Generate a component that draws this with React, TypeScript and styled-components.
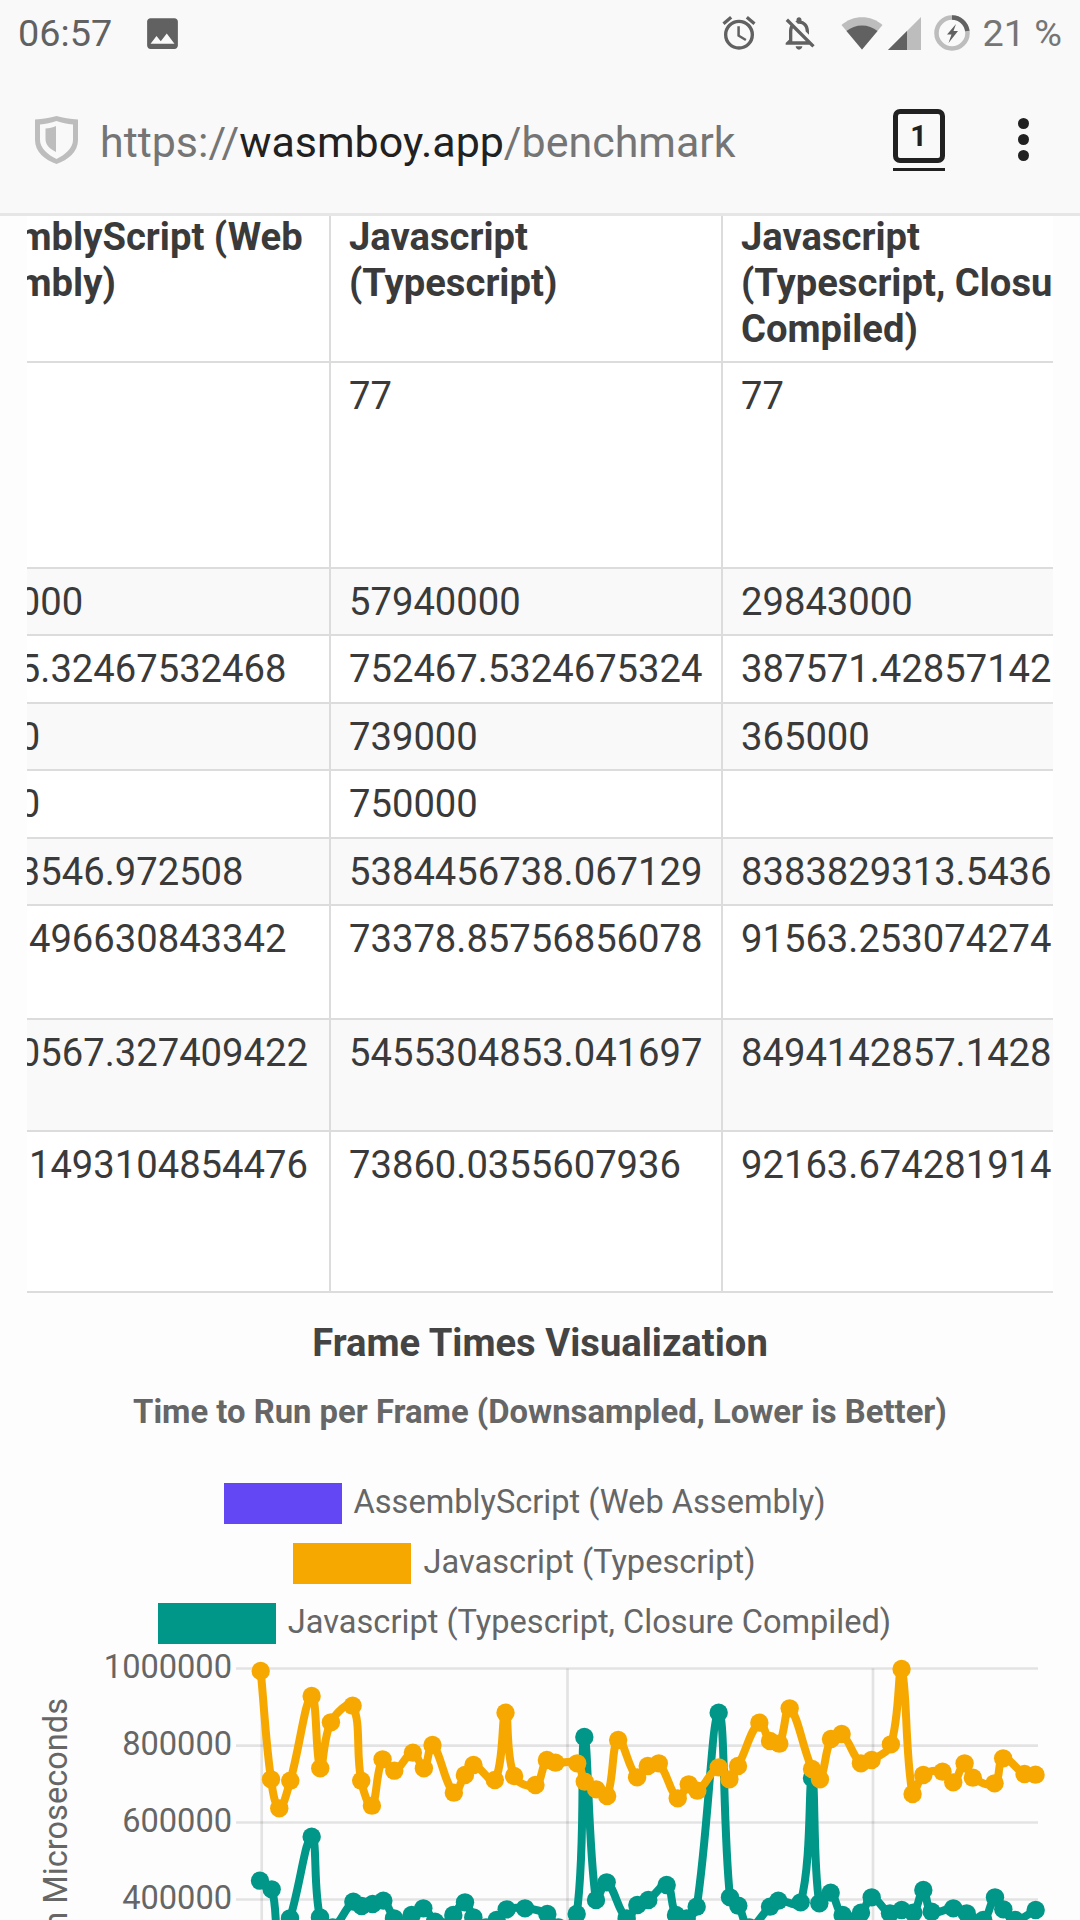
import React from "react";
import styled, { createGlobalStyle } from "styled-components";
import { MdImage, MdOutlineAlarm, MdOutlineNotificationsOff } from "react-icons/md";

const Global = createGlobalStyle`
  html, body { margin: 0; padding: 0; background: #fdfdfd; }
  body { font-family: Roboto, "Liberation Sans", sans-serif; }
`;

const Page = styled.div`
  width: 1080px;
  height: 1920px;
  overflow: hidden;
  background: #fdfdfd;
  display: flex;
  flex-direction: column;
`;

const Chrome = styled.header`
  height: 216px;
  flex: none;
  box-sizing: border-box;
  background: #f9f9f9;
  border-bottom: 3px solid #e6e6e6;
  display: flex;
  flex-direction: column;
`;

const StatusBar = styled.div`
  height: 66px;
  flex: none;
  padding: 0 18px;
  display: flex;
  align-items: center;
  color: #616161;
`;

const Clock = styled.span`
  font-size: 37.8px;
  width: 123.5px;
`;

const Spacer = styled.div`
  flex: 1;
`;

const StatusSlot = styled.span<{ $ml: number }>`
  display: flex;
  margin-left: ${(p) => p.$ml}px;
`;

const BatteryText = styled.span`
  font-size: 37.8px;
  color: #757575;
  margin-left: 12px;
`;

const Toolbar = styled.div`
  flex: 1;
  display: flex;
  align-items: center;
  padding: 0 0 0 34px;
`;

const Url = styled.div`
  margin: 4px 0 0 21px;
  font-size: 42.95px;
  color: #757575;
  flex: 1;
`;

const UrlHost = styled.span`
  color: #212121;
`;

const TabCounter = styled.div`
  position: relative;
  width: 52px;
  height: 54px;
  box-sizing: border-box;
  border: 5.5px solid #212121;
  border-radius: 7px;
  font-size: 29px;
  font-weight: 700;
  color: #212121;
  display: flex;
  align-items: center;
  justify-content: center;
  margin: -8px 73.5px 0 0;
  &::after {
    content: "";
    position: absolute;
    left: -5px;
    right: -5px;
    bottom: -13px;
    height: 3px;
    background: #212121;
  }
`;

const Dots = styled.div`
  display: flex;
  flex-direction: column;
  gap: 5px;
  margin-right: 51px;
`;

const Dot = styled.span`
  width: 11px;
  height: 11px;
  border-radius: 50%;
  background: #212121;
`;

const TableViewport = styled.div`
  flex: none;
  margin: 0 27px;
  height: 1077px;
  overflow: hidden;
  background: #fff;
`;

const Table = styled.table`
  border-collapse: collapse;
  table-layout: fixed;
  width: 1240px;
  margin-left: -112px;
  margin-top: -15px;
  font-size: 38.2px;
  line-height: 46px;
  color: #3a3a3a;
`;

const Row = styled.tr<{ $h: number; $shade?: boolean }>`
  height: ${(p) => p.$h}px;
  background: ${(p) => (p.$shade ? "#f9f9f9" : "#fff")};
`;

const Head = styled.th`
  text-align: left;
  vertical-align: top;
  font-weight: 700;
  padding: 11px 18px 7px;
  border: 2.7px solid #dcdcdc;
  &:first-child {
    padding-left: 16px;
  }
`;

const Cell = styled.td`
  vertical-align: top;
  padding: 10px 18px 8px;
  border: 2.7px solid #dcdcdc;
  white-space: nowrap;
  overflow: hidden;
  &:first-child {
    padding-left: 16px;
  }
`;

const ChartSection = styled.section`
  flex: 1;
  display: flex;
  flex-direction: column;
  align-items: center;
  min-height: 0;
`;

const ChartTitle = styled.h2`
  margin: 28px 0 0;
  font-size: 38.2px;
  line-height: 44px;
  font-weight: 700;
  color: #444;
`;

const ChartSubtitle = styled.h3`
  margin: 26px 0 0;
  font-size: 32.8px;
  line-height: 42px;
  font-weight: 700;
  color: #666;
`;

const Legend = styled.ul`
  list-style: none;
  margin: 50px 0 0;
  padding: 0 31px 0 0;
  display: flex;
  flex-direction: column;
  align-items: center;
  gap: 19px;
`;

const LegendItem = styled.li`
  display: flex;
  align-items: center;
  gap: 12px;
  height: 41px;
  font-size: 32.6px;
  color: #666;
`;

const LegendLabel = styled.span`
  margin-bottom: 3px;
`;

const Swatch = styled.span<{ $c: string }>`
  width: 118px;
  height: 41px;
  background: ${(p) => p.$c};
`;

const ChartSvg = styled.svg`
  display: block;
  flex: none;
  margin-top: 6px;
`;

type P = [number, number];

const CHART_TOP = 1650;

const toPts = (raw: number[][], ox: number): P[] =>
  raw.map(([x, y]) => [ox + x / 2.904, 1640 + y / 3 - CHART_TOP] as P);

const fromZoom = (raw: number[][], ox: number): P[] =>
  raw.map(([x, y]) => [ox + x / 3, 1840 + y / 3 - CHART_TOP] as P);

const orange: P[] = [
  ...toPts(
    [
      [757, 93], [787, 418], [811, 505], [843, 422], [905, 168], [930, 385], [961, 247], [1024, 197],
      [1049, 422], [1080, 497], [1111, 358], [1145, 392], [1199, 338], [1231, 385], [1256, 315],
      [1318, 458], [1350, 405], [1375, 375], [1437, 420], [1468, 218], [1493, 408], [1555, 435],
    ],
    0
  ),
  ...toPts(
    [
      [20, 360], [45, 368], [108, 370], [130, 425], [163, 448], [195, 468], [227, 300], [282, 412],
      [313, 378], [345, 370], [400, 475], [432, 433], [457, 452], [519, 382], [550, 418], [575, 378],
      [637, 248], [668, 303], [695, 311], [725, 205], [790, 387], [813, 418], [845, 297], [876, 282],
      [932, 370], [963, 360], [1019, 313], [1050, 87], [1082, 462], [1113, 405], [1169, 395],
      [1200, 427], [1233, 370], [1257, 413], [1320, 430], [1345, 355], [1407, 402], [1439, 404],
    ],
    540
  ),
];

const teal: P[] = [
  ...fromZoom(
    [
      [60, 122], [95, 148], [117, 300], [150, 235], [215, -10], [240, 232], [278, 262], [340, 185],
      [365, 198], [398, 192], [430, 182], [462, 235], [490, 262], [515, 225], [550, 205], [585, 245],
      [612, 262], [640, 225], [675, 187], [700, 232], [738, 262], [770, 240], [800, 208], [855, 205],
      [922, 222], [955, 262], [1010, 222], [1033, -309], [1068, 180], [1100, 127], [1160, 235],
      [1192, 195], [1225, 180],
    ],
    240
  ),
  ...fromZoom(
    [
      [20, 135], [48, 225], [80, 235], [110, 200], [176, -382], [210, 172], [235, 197], [268, 262],
      [330, 200], [355, 182], [422, 187], [456, -186], [478, 190], [512, 158], [548, 225], [603, 218],
      [635, 172], [690, 220], [725, 210], [760, 218], [790, 150], [815, 215], [880, 205], [920, 220],
      [970, 240], [1005, 172], [1030, 208], [1065, 240], [1127, 210],
    ],
    660
  ),
];

function spline(pts: P[], t = 0.4): string {
  let d = `M${pts[0][0].toFixed(1)} ${pts[0][1].toFixed(1)}`;
  const cps = pts.map((c, i) => {
    const p = pts[Math.max(i - 1, 0)];
    const n = pts[Math.min(i + 1, pts.length - 1)];
    const d01 = Math.hypot(c[0] - p[0], c[1] - p[1]);
    const d12 = Math.hypot(n[0] - c[0], n[1] - c[1]);
    const sum = d01 + d12 || 1;
    const fa = (t * d01) / sum;
    const fb = (t * d12) / sum;
    return {
      in: [c[0] - fa * (n[0] - p[0]), c[1] - fa * (n[1] - p[1])],
      out: [c[0] + fb * (n[0] - p[0]), c[1] + fb * (n[1] - p[1])],
    };
  });
  for (let i = 1; i < pts.length; i++) {
    d += `C${cps[i - 1].out[0].toFixed(1)} ${cps[i - 1].out[1].toFixed(1)} ${cps[i].in[0].toFixed(1)} ${cps[i].in[1].toFixed(1)} ${pts[i][0].toFixed(1)} ${pts[i][1].toFixed(1)}`;
  }
  return d;
}

const rows: { h: number; shade?: boolean; c: string[] }[] = [
  { h: 205.5, c: ["", "77", "77"] },
  { h: 67.5, shade: true, c: ["2864000", "57940000", "29843000"] },
  { h: 67.5, c: ["37205.32467532468", "752467.5324675324", "387571.4285714286"] },
  { h: 67, shade: true, c: ["36500", "739000", "365000"] },
  { h: 68, c: ["36000", "750000", ""] },
  { h: 67, shade: true, c: ["43903546.972508", "5384456738.067129", "8383829313.543614"] },
  { h: 114, c: ["6730.496630843342", "73378.85756856078", "91563.25307427423"] },
  { h: 112, shade: true, c: ["43900567.327409422", "5455304853.041697", "8494142857.142857"] },
  { h: 161, c: ["6740.1493104854476", "73860.0355607936", "92163.67428191489"] },
];

const gridY = [1668.5, 1745.7, 1822.5, 1899.5].map((y) => y - CHART_TOP);
const gridX = [261.7, 567.5, 873];
const ticks = ["1000000", "800000", "600000", "400000"];

const Shield = () => (
  <svg width="45" height="50" viewBox="0 0 45 50">
    <path d="M22.5 1 C29 3 36 4 44 4.5 V25 C44 37 34 45 22.5 49 C11 45 1 37 1 25 V4.5 C9 4 16 3 22.5 1 Z" fill="#bdbdbd" />
    <path d="M22.5 6 C28 8 33 9 39 9.5 V25 C39 33 31 40 22.5 44 C14 40 6 33 6 25 V9.5 C12 9 17 8 22.5 6 Z" fill="#f9f9f9" />
    <path d="M22 11 V37 C16 34 11.5 30 11.5 24 V13.5 C15 13.5 19 12.5 22 11 Z" fill="#bdbdbd" />
  </svg>
);

const Wifi = () => (
  <svg width="44" height="34" viewBox="0 0 44 34">
    <path d="M22 33.5 L1.5 9 C13 -1.5 31 -1.5 42.5 9 Z" fill="#bdbdbd" />
    <path d="M22 33.5 L6.5 15 C15 7.5 29 7.5 37.5 15 Z" fill="#616161" />
  </svg>
);

const Signal = () => (
  <svg width="33" height="33" viewBox="0 0 33 33">
    <path d="M33 0 V33 H0 Z" fill="#bdbdbd" />
    <path d="M19 14 V33 H0 Z" fill="#616161" />
  </svg>
);

const BatteryRing = () => (
  <svg width="36" height="36" viewBox="0 0 36 36">
    <circle cx="18" cy="18" r="15.5" fill="none" stroke="#bdbdbd" strokeWidth="4.5" />
    <path d="M18 2.5 A15.5 15.5 0 0 1 33.3 16" fill="none" stroke="#616161" strokeWidth="4.5" />
    <path d="M22 9 L13 19.5 H17.5 L14.5 28 L24 16 H19.5 Z" fill="#616161" />
  </svg>
);

export default function App() {
  return (
    <Page>
      <Global />
      <Chrome>
        <StatusBar>
          <Clock>06:57</Clock>
          <MdImage size={41} color="#616161" />
          <Spacer />
          <MdOutlineAlarm size={40} color="#616161" />
          <StatusSlot $ml={20}>
            <MdOutlineNotificationsOff size={40} color="#616161" />
          </StatusSlot>
          <StatusSlot $ml={21}>
            <Wifi />
          </StatusSlot>
          <StatusSlot $ml={4}>
            <Signal />
          </StatusSlot>
          <StatusSlot $ml={13}>
            <BatteryRing />
          </StatusSlot>
          <BatteryText>21 %</BatteryText>
        </StatusBar>
        <Toolbar>
          <Shield />
          <Url>
            https://<UrlHost>wasmboy.app</UrlHost>/benchmark
          </Url>
          <TabCounter>1</TabCounter>
          <Dots>
            <Dot />
            <Dot />
            <Dot />
          </Dots>
        </Toolbar>
      </Chrome>
      <TableViewport>
        <Table>
          <colgroup>
            <col width="414" />
            <col width="392" />
            <col width="434" />
          </colgroup>
          <thead>
            <Row $h={160}>
              <Head>AssemblyScript (Web Assembly)</Head>
              <Head>Javascript (Typescript)</Head>
              <Head>
                Javascript
                <br />
                (Typescript, Closure Compiled)
              </Head>
            </Row>
          </thead>
          <tbody>
            {rows.map((r, i) => (
              <Row key={i} $h={r.h} $shade={r.shade}>
                {r.c.map((v, j) => (
                  <Cell key={j}>{v}</Cell>
                ))}
              </Row>
            ))}
          </tbody>
        </Table>
      </TableViewport>
      <ChartSection>
        <ChartTitle>Frame Times Visualization</ChartTitle>
        <ChartSubtitle>Time to Run per Frame (Downsampled, Lower is Better)</ChartSubtitle>
        <Legend>
          <LegendItem>
            <Swatch $c="#6347f5" />
            <LegendLabel>AssemblyScript (Web Assembly)</LegendLabel>
          </LegendItem>
          <LegendItem>
            <Swatch $c="#f7a800" />
            <LegendLabel>Javascript (Typescript)</LegendLabel>
          </LegendItem>
          <LegendItem>
            <Swatch $c="#009688" />
            <LegendLabel>Javascript (Typescript, Closure Compiled)</LegendLabel>
          </LegendItem>
        </Legend>
        <ChartSvg width="1080" height="270" viewBox="0 0 1080 270">
          {gridY.map((y) => (
            <line key={y} x1="236" x2="1038" y1={y} y2={y} stroke="#000" strokeOpacity="0.1" strokeWidth="2.7" />
          ))}
          {gridX.map((x) => (
            <line key={x} x1={x} x2={x} y1={gridY[0]} y2="270" stroke="#000" strokeOpacity="0.1" strokeWidth="2.7" />
          ))}
          {ticks.map((t, i) => (
            <text key={t} x="232" y={gridY[i] + 9} textAnchor="end" fontFamily="Roboto" fontSize="32.6" fill="#666">
              {t}
            </text>
          ))}
          <text
            transform="translate(67 48) rotate(-90)"
            textAnchor="end"
            fontFamily="Roboto"
            fontSize="32.6"
            fill="#666"
          >
            Time in Microseconds
          </text>
          <path d={spline(teal)} fill="none" stroke="#009688" strokeWidth="8" />
          {teal.map(([x, y], i) => (
            <circle key={i} cx={x} cy={y} r="9.2" fill="#009688" />
          ))}
          <path d={spline(orange)} fill="none" stroke="#f7a800" strokeWidth="8" />
          {orange.map(([x, y], i) => (
            <circle key={i} cx={x} cy={y} r="9.2" fill="#f7a800" />
          ))}
        </ChartSvg>
      </ChartSection>
    </Page>
  );
}
